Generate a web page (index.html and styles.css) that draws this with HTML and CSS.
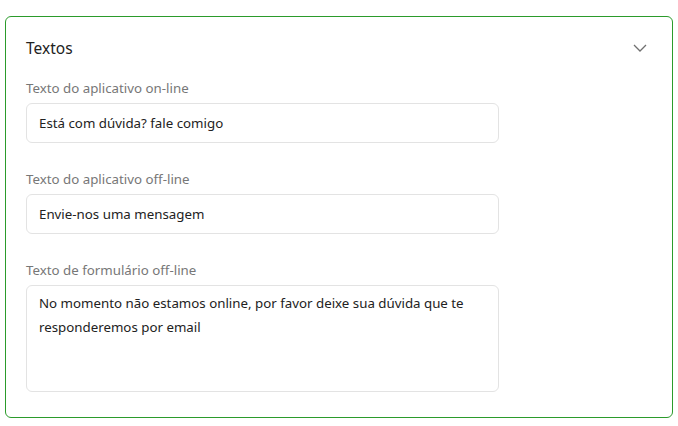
FILE: index.html
```html
<!DOCTYPE html>
<html>
<head>
    <title>Textos</title>
    <link rel="stylesheet" href="styles.css">
</head>
<body>
    <div class="card">
        <div class="card-header">
            <h3>Textos</h3>
            <svg class="chevron" width="14" height="8" viewBox="0 0 14 8">
                <path d="M1 1 L7 7 L13 1" fill="none" stroke="#707070" stroke-width="1.3"/>
            </svg>
        </div>
        <div class="field">
            <label for="onlineText">Texto do aplicativo on-line</label>
            <input id="onlineText" type="text" value="Está com dúvida? fale comigo">
        </div>
        <div class="field">
            <label for="offlineText">Texto do aplicativo off-line</label>
            <input id="offlineText" type="text" value="Envie-nos uma mensagem">
        </div>
        <div class="field">
            <label for="formText">Texto de formulário off-line</label>
            <textarea id="formText">No momento não estamos online, por favor deixe sua dúvida que te responderemos por email</textarea>
        </div>
    </div>
</body>
</html>
```

FILE: styles.css
```css
body {
    font-family: 'Noto Sans', 'Open Sans', sans-serif;
    background-color: #fff;
    margin: 0;
    padding: 16px 5px 0 5px;
}
.card {
    border: 1px solid #2b9b2b;
    border-radius: 6px;
    padding: 19px 20px 24px 20px;
    height: 402px;
    box-sizing: border-box;
}
.card-header {
    display: flex;
    justify-content: space-between;
    align-items: center;
    height: 24px;
    margin-bottom: 18px;
}
.card-header h3 {
    margin: 0;
    font-size: 15.5px;
    font-weight: 400;
    color: #222;
}
.chevron {
    margin-right: 5px;
}
.field {
    display: flex;
    flex-direction: column;
    width: 473px;
    margin-bottom: 26px;
}
label {
    font-size: 13.3px;
    line-height: 20px;
    color: #777;
    margin-bottom: 5px;
}
input, textarea {
    font-family: inherit;
    font-size: 13.3px;
    color: #222;
    border: 1px solid #e3e3e3;
    border-radius: 6px;
    padding: 0 12px;
    box-sizing: border-box;
    outline: none;
}
input {
    height: 40px;
}
textarea {
    height: 107px;
    line-height: 24px;
    padding-top: 5px;
    resize: none;
}
```
